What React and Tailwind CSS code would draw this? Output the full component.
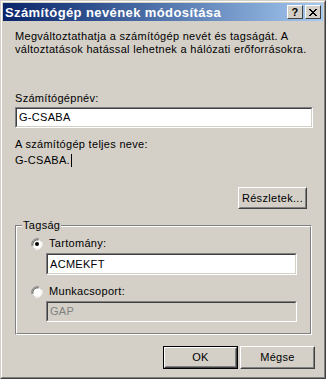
const font = { fontFamily: '"Liberation Sans", Arial, sans-serif' }

function Sunken({ className = '', disabled, children }) {
  return (
    <div className={`border border-[#808080] border-r-white border-b-white ${className}`}>
      <div
        className={`h-full border border-[#404040] border-r-[#d4d0c8] border-b-[#d4d0c8] flex items-center pl-[2px] ${
          disabled ? 'bg-[#d4d0c8] text-[#808080]' : 'bg-white text-black'
        }`}
      >
        {children}
      </div>
    </div>
  )
}

function Button({ children, className = '', isDefault }) {
  const inner = (
    <div className="h-full border border-white border-r-[#404040] border-b-[#404040]">
      <div className="h-full border border-[#d4d0c8] border-r-[#808080] border-b-[#808080] flex items-center justify-center">
        {children}
      </div>
    </div>
  )
  return isDefault ? (
    <div className={`border border-black ${className}`}>{inner}</div>
  ) : (
    <div className={className}>{inner}</div>
  )
}

function Radio({ checked }) {
  return (
    <svg width="12" height="12" viewBox="0 0 12 12" className="shrink-0">
      <path d="M8 1 A5.5 5.5 0 0 0 1 8" stroke="#808080" fill="none" />
      <path d="M11 4 A5.5 5.5 0 0 1 4 11" stroke="#ffffff" fill="none" />
      <circle cx="6" cy="6" r="4.5" fill="#ffffff" />
      <path d="M7.5 2 A4.5 4.5 0 0 0 2 7.5" stroke="#404040" fill="none" />
      {checked && <circle cx="6" cy="6" r="2" fill="#000" />}
    </svg>
  )
}

function TitleButton({ children }) {
  return (
    <div className="w-[16px] h-[14px] bg-[#d4d0c8] border border-white border-r-[#404040] border-b-[#404040] flex items-center justify-center text-[11px] font-bold leading-none text-black">
      {children}
    </div>
  )
}

export default function App() {
  return (
    <div className="w-[326px] h-[379px] text-[11px] leading-[13px] tracking-[0.3px] text-black" style={font}>
      <div className="h-full border border-[#d4d0c8] border-r-[#404040] border-b-[#404040]">
        <div className="h-full border border-white border-r-[#808080] border-b-[#808080] bg-[#d4d0c8] p-px flex flex-col">
          <div className="h-[18px] bg-gradient-to-r from-[#0a246a] to-[#a6caf0] flex items-center pl-[2px] pr-[2px]">
            <span className="text-white font-bold text-[13px] tracking-[0.4px] flex-1">Számítógép nevének módosítása</span>
            <TitleButton>?</TitleButton>
            <div className="w-[2px]" />
            <TitleButton>
              <svg width="8" height="7" viewBox="0 0 8 7">
                <path d="M0 0 L7 7 M1 0 L8 7 M7 0 L0 7 M8 0 L1 7" stroke="#000" strokeWidth="1" />
              </svg>
            </TitleButton>
          </div>

          <div className="flex flex-col pl-[12px] pr-[10px] pt-[9px]">
            <p>
              Megváltoztathatja a számítógép nevét és tagságát. A
              <br />
              változtatások hatással lehetnek a hálózati erőforrásokra.
            </p>

            <div className="mt-[36px]">Számítógépnév:</div>
            <Sunken className="mt-[2px] h-[21px]">G-CSABA</Sunken>

            <div className="mt-[10px]">A számítógép teljes neve:</div>
            <div className="mt-[3px] flex items-center">
              G-CSABA.
              <span className="w-px h-[13px] bg-black ml-px" />
            </div>

            <Button className="mt-[20px] self-end mr-[6px] w-[69px] h-[22px]">Részletek...</Button>

            <div className="relative mt-[16px] mr-px h-[110px] border border-[#808080] border-r-white border-b-white">
              <div className="h-full border border-white border-r-[#808080] border-b-[#808080] flex flex-col pl-[14px] pr-[13px]">
                <div className="mt-[10px] flex items-center gap-[6px]">
                  <Radio checked />
                  <span>Tartomány:</span>
                </div>
                <Sunken className="mt-[3px] ml-[15px] h-[22px]">ACMEKFT</Sunken>
                <div className="mt-[10px] flex items-center gap-[6px]">
                  <Radio />
                  <span>Munkacsoport:</span>
                </div>
                <Sunken disabled className="mt-[3px] ml-[15px] h-[21px]">GAP</Sunken>
              </div>
              <span className="absolute left-[6px] -top-[7px] px-px bg-[#d4d0c8]">Tagság</span>
            </div>

            <div className="mt-[11px] flex justify-end gap-[2px] mr-[-2px]">
              <Button isDefault className="w-[75px] h-[23px]">OK</Button>
              <Button className="w-[75px] h-[23px]">Mégse</Button>
            </div>
          </div>
        </div>
      </div>
    </div>
  )
}
